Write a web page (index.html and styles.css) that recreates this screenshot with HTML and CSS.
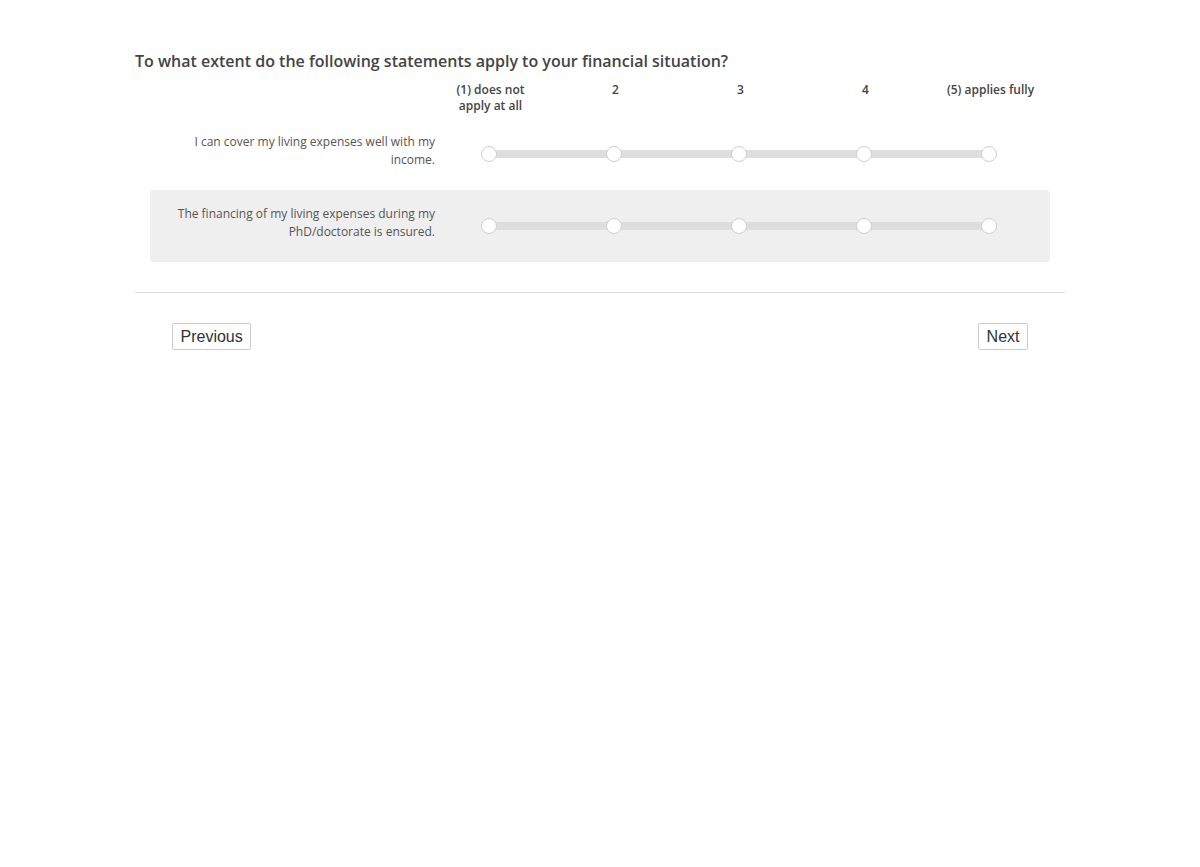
FILE: index.html
```html
<!DOCTYPE html>
<html lang="en">
<head>
  <meta charset="UTF-8">
  <meta name="viewport" content="width=device-width, initial-scale=1.0">
  <title>Financial situation</title>
  <link rel="stylesheet" href="styles.css">
</head>
<body>
  <div class="survey">
    <h2 class="question">To what extent do the following statements apply to your financial situation?</h2>

    <div class="matrix">
      <div class="matrix-row matrix-head">
        <div></div>
        <div class="scale-label">(1) does not apply at all</div>
        <div class="scale-label">2</div>
        <div class="scale-label">3</div>
        <div class="scale-label">4</div>
        <div class="scale-label">(5) applies fully</div>
      </div>

      <div class="matrix-row item">
        <div class="item-label">I can cover my living expenses well with my income.</div>
        <label class="stop first"><span class="knob"></span></label>
        <label class="stop"><span class="knob"></span></label>
        <label class="stop"><span class="knob"></span></label>
        <label class="stop"><span class="knob"></span></label>
        <label class="stop last"><span class="knob"></span></label>
      </div>

      <div class="matrix-row item alt">
        <div class="item-label">The financing of my living expenses during my PhD/doctorate is ensured.</div>
        <label class="stop first"><span class="knob"></span></label>
        <label class="stop"><span class="knob"></span></label>
        <label class="stop"><span class="knob"></span></label>
        <label class="stop"><span class="knob"></span></label>
        <label class="stop last"><span class="knob"></span></label>
      </div>
    </div>

    <hr class="divider">

    <div class="nav">
      <button>Previous</button>
      <button>Next</button>
    </div>
  </div>
</body>
</html>
```

FILE: styles.css
```css
body {
  margin: 0;
  font-family: "Open Sans", sans-serif;
  background-color: #fff;
  color: #444;
}

.survey {
  max-width: 930px;
  margin: 0 auto;
  padding-top: 50px;
}

.question {
  margin: 0 0 10px;
  font-size: 16px;
  line-height: 22px;
  font-weight: 600;
  color: #444;
}

.matrix {
  margin: 0 15px;
}

.matrix-row {
  display: grid;
  grid-template-columns: 276px repeat(5, 125px);
}

.matrix-head {
  margin-bottom: 4px;
}

.scale-label {
  padding: 0 12px 0 16px;
  font-size: 12px;
  line-height: 16px;
  font-weight: 600;
  text-align: center;
  color: #444;
}

.item {
  height: 72px;
  border-radius: 4px;
}

.item.alt {
  background-color: #efefef;
}

.item-label {
  align-self: center;
  margin-right: -9px;
  padding: 0 0 6px 20px;
  font-size: 12px;
  line-height: 18px;
  text-align: right;
  color: #555;
}

.stop {
  display: flex;
  justify-content: center;
  align-items: center;
  background-image: linear-gradient(#dedede, #dedede);
  background-size: 100% 8px;
  background-position: center;
  background-repeat: no-repeat;
  cursor: pointer;
}

.stop.first {
  background-size: 50% 8px;
  background-position: right center;
}

.stop.last {
  background-size: 50% 8px;
  background-position: left center;
}

.knob {
  width: 14px;
  height: 14px;
  border: 1px solid #cfcfcf;
  border-radius: 50%;
  background-color: #fff;
}

.divider {
  margin: 30px 0 0;
  border: none;
  border-top: 1px solid #ddd;
}

.nav {
  display: flex;
  justify-content: space-between;
  padding: 30px 37px 0;
}

.nav button {
  padding: 4px 7.5px 3px;
  font-family: "Liberation Sans", Arial, sans-serif;
  font-size: 16px;
  color: #333;
  background-color: #fff;
  border: 1px solid #ccc;
  border-radius: 2px;
  cursor: pointer;
}
```
